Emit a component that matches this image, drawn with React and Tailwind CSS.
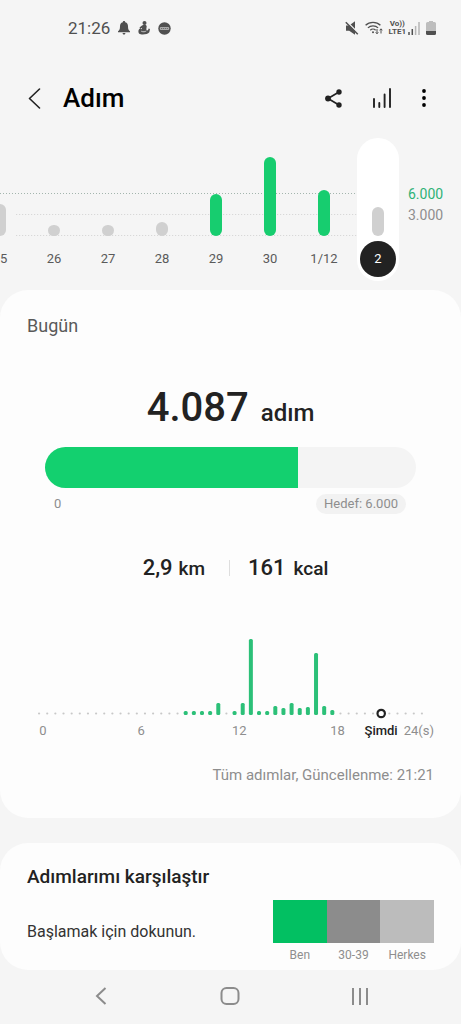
const days = [
  { label: "25", height: 32, met: false },
  { label: "26", height: 11, met: false },
  { label: "27", height: 11, met: false },
  { label: "28", height: 14, met: false },
  { label: "29", height: 42, met: true },
  { label: "30", height: 79, met: true },
  { label: "1/12", height: 46, met: true },
  { label: "2", height: 29, met: false, selected: true },
];

// Step bars keyed by half-hour slot
const slots = {
  18: 4, 19: 4, 20: 4, 21: 4, 22: 12, 24: 4, 25: 12, 26: 76, 27: 4, 28: 4,
  29: 9, 30: 7, 31: 12, 32: 7, 33: 8, 34: 62, 35: 9, 36: 5,
};
const NOW_SLOT = 42;
const PITCH = 391 / 48;

function StatusBar() {
  return (
    <div className="flex h-14 items-center justify-between pl-[68px] pr-[25px] text-[#505050]">
      <div className="flex items-center gap-2">
        <span className="text-[17px] leading-5">21:26</span>
        <svg width="12" height="14" viewBox="0 0 12 14" fill="currentColor" aria-hidden="true">
          <path d="M6 0c.8 0 1.200.5 1.200 1.200C9.300 1.700 10 3.300 10 5.200c0 3 .6 4.200 2 5.100v1H0v-1c1.400-.9 2-2.100 2-5.100 0-1.900.7-3.500 2.800-4C4.800.5 5.200 0 6 0zM4.600 12h2.800c-.1 1-.6 1.600-1.400 1.600S4.700 13 4.600 12z" />
        </svg>
        <svg width="12" height="14" viewBox="0 0 12 14" fill="currentColor" aria-hidden="true">
          <circle cx="6.500" cy="2" r="2" />
          <path d="M4 4.500C5.500 3.300 8 3.400 8.600 4.800c.3 1.200-.5 2.700-.2 4l1.400.6.9-1.800 1.300.4-.7 3.200c-1.600 2.300-8 3-10.300 1.300C0 11 .2 8.300 2 7.400l1.600.8.6-1.400-1.900.9L1.500 6.600z" />
          <path d="M3.200 10.200c2 1 4 .6 5.200-.4" fill="none" stroke="#f5f5f5" strokeWidth="0.700" />
        </svg>
        <svg width="13" height="13" viewBox="0 0 13 13" aria-hidden="true">
          <circle cx="6.500" cy="6.500" r="6.200" fill="currentColor" />
          <rect x="1.800" y="5" width="9.400" height="3" rx="1" fill="#aaa" />
          <path d="M3 6.500h7" stroke="#666" strokeWidth="0.900" strokeDasharray="1.300 .7" />
        </svg>
      </div>
      <div className="flex items-center gap-1.5">
        <svg width="14" height="14" viewBox="0 0 14 14" fill="currentColor" aria-hidden="true">
          <path d="M1 4.500h3.200L10 .3v13.400L4.200 9.800H1z" />
          <path d="M2 .8L14 12.800" stroke="#f5f5f5" strokeWidth="1.500" />
          <path d="M.8 1.200L12.800 13.200" stroke="currentColor" strokeWidth="1.500" />
        </svg>
        <svg width="18" height="14" viewBox="0 0 18 14" fill="none" stroke="currentColor" strokeWidth="1.300" aria-hidden="true">
          <path d="M.6 4.300C4.500.3 11.500.3 15.400 4.300M2.900 6.900c2.700-2.800 7.500-2.800 10.200 0M5.300 9.200c1.500-1.400 3.900-1.400 5.300 0" />
          <circle cx="8" cy="11.300" r="1" fill="currentColor" stroke="none" />
          <path d="M12 8v4.500M10.700 11.300L12 12.800l1.300-1.500M16 12.500V8M14.700 9.300L16 7.800l1.300 1.500" strokeWidth="1" />
        </svg>
        <div className="flex flex-col items-center text-[8px] font-bold leading-[8px]">
          <span>Vo))</span>
          <span>LTE1</span>
        </div>
        <svg className="-ml-1" width="12" height="13" viewBox="0 0 12 13" aria-hidden="true">
          <path d="M1 10v3M4.300 7v6" stroke="#505050" strokeWidth="1.500" />
          <path d="M7.600 4v9M11 0v13" stroke="#b5b5b5" strokeWidth="1.500" />
        </svg>
        <svg width="10" height="14" viewBox="0 0 10 14" aria-hidden="true">
          <path d="M3 0h4v1h1.500Q10 1 10 2.500V10H0V2.500Q0 1 1.500 1H3z" fill="#bdbdbd" />
          <path d="M0 10h10v2.500Q10 14 8.500 14h-7Q0 14 0 12.500z" fill="#505050" />
        </svg>
      </div>
    </div>
  );
}

function Header() {
  return (
    <header className="flex h-[82px] items-center justify-between pl-7 pr-[35px] pt-0.5">
      <div className="flex items-center gap-[22px]">
        <button aria-label="Geri" className="flex h-8 w-[13px] items-center">
          <svg width="13" height="21" viewBox="0 0 13 21" fill="none" stroke="#222" strokeWidth="1.600" strokeLinecap="round" strokeLinejoin="round">
            <path d="M11.500 1L1.500 10.500l10 9.500" />
          </svg>
        </button>
        <h1 className="text-[26px] font-medium leading-8 text-black">Adım</h1>
      </div>
      <div className="flex items-center gap-[30px]">
        <button aria-label="Paylaş" className="flex h-8 items-center">
          <svg width="17" height="19" viewBox="0 0 17 19" fill="#222" stroke="#222">
            <path d="M14 3L3 9.500 14 16" fill="none" strokeWidth="1.700" />
            <circle cx="14" cy="3" r="2.700" stroke="none" />
            <circle cx="3" cy="9.500" r="2.900" stroke="none" />
            <circle cx="14" cy="16" r="2.700" stroke="none" />
          </svg>
        </button>
        <button aria-label="Grafikler" className="flex h-8 items-center">
          <svg width="20" height="20" viewBox="0 0 20 20" stroke="#222" strokeWidth="1.900" strokeLinecap="round">
            <path d="M2 11v8M7.300 15v4M12.600 6.500V19M18 1v18" />
          </svg>
        </button>
        <button aria-label="Diğer seçenekler" className="flex h-8 items-center">
          <svg width="4" height="18" viewBox="0 0 4 18" fill="#000">
            <circle cx="2" cy="2" r="1.900" />
            <circle cx="2" cy="9" r="1.900" />
            <circle cx="2" cy="16" r="1.900" />
          </svg>
        </button>
      </div>
    </header>
  );
}

function Day({ day }) {
  return (
    <button className="relative flex w-[54px] shrink-0 justify-center">
      <span className={day.selected ? "flex w-[42px] flex-col items-center rounded-full bg-white pb-1" : "flex flex-col items-center pb-1"}>
        <span className="flex h-[98px] items-end">
          <span
            className={day.met ? "block w-3 rounded-full bg-[#17cd6f]" : "block w-3 rounded-full bg-[#d0d0d0]"}
            style={{ height: day.height }}
          />
        </span>
        <span
          className={
            day.selected
              ? "mt-[5px] flex size-9 items-center justify-center rounded-full bg-[#222] text-[13px] text-white"
              : "mt-[5px] flex h-9 items-center text-[13px] text-[#5a5a5a]"
          }
        >
          {day.label}
        </span>
      </span>
    </button>
  );
}

function WeekChart() {
  return (
    <section className="flex h-[152px] overflow-hidden">
      <div className="relative flex min-w-0 flex-1 items-start justify-end">
        <svg className="absolute inset-x-0 top-0 h-[98px] w-full" aria-hidden="true">
          <g strokeWidth="1">
            <line x1="0" x2="94%" y1="55.500" y2="55.500" stroke="#a3b5ad" strokeDasharray="1 2" />
            <line x1="4%" x2="94%" y1="76.500" y2="76.500" stroke="#d2d2d2" strokeDasharray="1 2" />
            <line x1="4%" x2="94%" y1="97.500" y2="97.500" stroke="#d2d2d2" strokeDasharray="1 2" />
          </g>
        </svg>
        {days.map((day) => (
          <Day key={day.label} day={day} />
        ))}
      </div>
      <div className="flex w-14 flex-col gap-px pl-[3px] pt-[46px] text-[14px] leading-5">
        <span className="text-[#2fb277]">6.000</span>
        <span className="text-[#8e8e8e]">3.000</span>
      </div>
    </section>
  );
}

function HourChart() {
  return (
    <svg className="block h-auto w-full" viewBox="0 0 391 82" role="img" aria-label="Saatlik adımlar">
      {Array.from({ length: 48 }, (_, i) => {
        const x = (i + 0.5) * PITCH;
        if (i === NOW_SLOT) {
          return <circle key={i} cx={x} cy="75.500" r="3.700" fill="#fff" stroke="#222" strokeWidth="2.200" />;
        }
        const h = slots[i];
        return h ? (
          <rect key={i} x={x - 2} y={77 - h} width="4" height={h} rx="1.500" fill="#2cc078" />
        ) : (
          <circle key={i} cx={x} cy="75.500" r="1.100" fill="#c8c8c8" />
        );
      })}
    </svg>
  );
}

function TodayCard() {
  return (
    <section className="rounded-[28px] bg-[#fdfdfd] pb-[33px] pt-6">
      <h2 className="px-[27px] text-[18px] leading-6 text-[#5a5a5a]">Bugün</h2>
      <p className="mt-[50px] flex h-10 items-baseline justify-center gap-3 font-medium text-[#222]">
        <span className="text-[40px] leading-10">4.087</span>
        <span className="text-[24px] leading-8">adım</span>
      </p>
      <div className="mx-[45px] mt-[19px] h-[41px] overflow-hidden rounded-full bg-[#f4f4f4]">
        <div className="h-full w-[68.1%] bg-[#13d06f]" />
      </div>
      <div className="mt-1.5 flex h-5 items-center justify-between pl-[54px] pr-[55px] text-[13px] leading-5 text-[#8e8e8e]">
        <span>0</span>
        <span className="rounded-full bg-[#f2f2f2] px-2">Hedef: 6.000</span>
      </div>
      <div className="mt-10 flex h-7 items-center justify-center gap-[18px] pl-2.5 font-medium text-[#222]">
        <p className="flex items-baseline gap-1.5 leading-7">
          <span className="text-[22px]">2,9</span>
          <span className="text-[19px]">km</span>
        </p>
        <span className="ml-1.5 h-4 w-px bg-[#dedede]" />
        <p className="flex items-baseline gap-2 leading-7">
          <span className="text-[22px]">161</span>
          <span className="text-[19px]">kcal</span>
        </p>
      </div>
      <div className="mt-14 px-[35px]">
        <HourChart />
      </div>
      <div className="mt-px flex gap-[19px] pl-[35px] pr-[27px] text-[13px] leading-5 text-[#8e8e8e]">
        <div className="flex flex-1 justify-between">
          <span className="w-4 text-center">0</span>
          <span className="w-4 text-center">6</span>
          <span className="w-4 text-center">12</span>
          <span className="w-4 text-center">18</span>
        </div>
        <div className="flex gap-1.5">
          <span className="font-medium text-[#222]">Şimdi</span>
          <span>24(s)</span>
        </div>
      </div>
      <p className="mt-6 px-[27px] text-right text-[15px] leading-5 text-[#8e8e8e]">Tüm adımlar, Güncellenme: 21:21</p>
    </section>
  );
}

function CompareCard() {
  return (
    <section className="mt-[25px] rounded-[28px] bg-[#fdfdfd] px-[27px] pb-[7px] pt-[22px]">
      <h2 className="text-[19px] font-medium leading-6 text-[#222]">Adımlarımı karşılaştır</h2>
      <div className="mt-[11px] flex justify-between">
        <p className="mt-5 text-[16px] leading-6 text-[#333]">Başlamak için dokunun.</p>
        <div className="grid w-[161px] grid-cols-3 text-center text-[12px] leading-4 text-[#8e8e8e]">
          <div>
            <div className="mb-1 h-[43px] bg-[#02c062]" />
            Ben
          </div>
          <div>
            <div className="mb-1 h-[43px] bg-[#8c8c8c]" />
            30-39
          </div>
          <div>
            <div className="mb-1 h-[43px] bg-[#bcbcbc]" />
            Herkes
          </div>
        </div>
      </div>
    </section>
  );
}

function NavBar() {
  return (
    <nav className="flex h-[54px] items-center justify-around px-9 pb-0.5">
      <button aria-label="Geri" className="flex h-8 w-8 items-center justify-center">
        <svg width="12" height="18" viewBox="0 0 12 18" fill="none" stroke="#8c8c8c" strokeWidth="2">
          <path d="M10.500 1L2 9l8.500 8" />
        </svg>
      </button>
      <button aria-label="Ana ekran" className="flex h-8 w-8 items-center justify-center">
        <svg width="20" height="18" viewBox="0 0 20 18" fill="none" stroke="#8c8c8c" strokeWidth="2">
          <rect x="1.500" y="1" width="17" height="16" rx="5" />
        </svg>
      </button>
      <button aria-label="Son uygulamalar" className="flex h-8 w-8 items-center justify-center">
        <svg width="18" height="17" viewBox="0 0 18 17" stroke="#8c8c8c" strokeWidth="2">
          <path d="M2 0v17M9 0v17M16 0v17" />
        </svg>
      </button>
    </nav>
  );
}

export default function App() {
  return (
    <div className="min-h-screen bg-[#f5f5f5] font-[Roboto,sans-serif]">
      <StatusBar />
      <Header />
      <main>
        <WeekChart />
        <TodayCard />
        <CompareCard />
      </main>
      <NavBar />
    </div>
  );
}
